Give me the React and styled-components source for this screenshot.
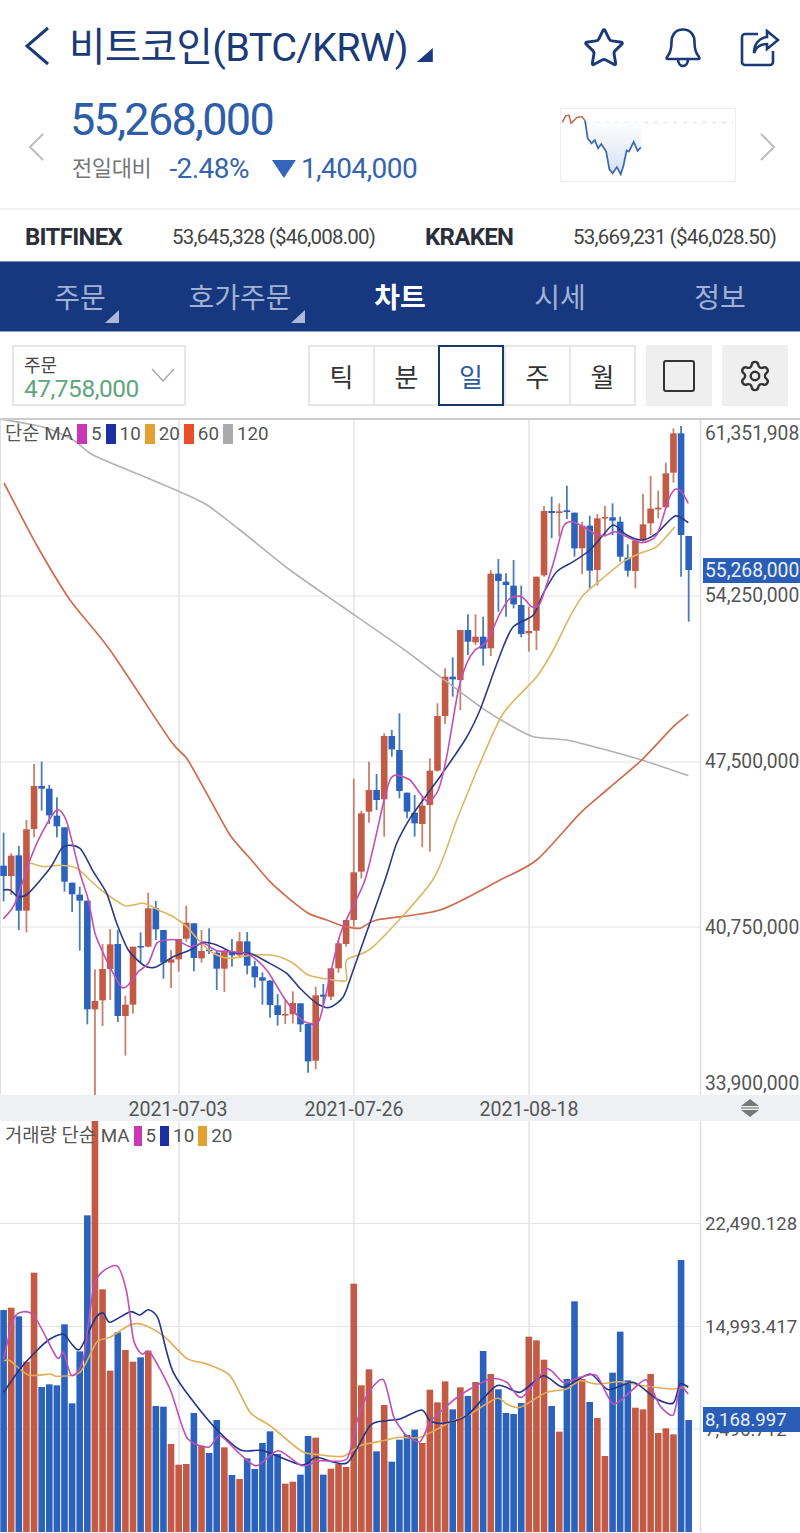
import React from "react";
import styled, { createGlobalStyle } from "styled-components";
import { Star, Settings } from "lucide-react";

const GlobalStyle = createGlobalStyle`
  html, body {
    margin: 0;
    padding: 0;
    background: #fff;
  }
  body {
    font-family: Roboto, "Noto Sans CJK KR", sans-serif;
  }
`;

const NAVY = "#1b3a78";
const RED = "#c35a45";
const BLUE = "#2b62bd";

// bar centers on the page
const barX = (k) => 3.6 + 7.612 * k;

// candles: [up?, wick top, body top, body bottom, wick bottom]
const zoomLeft = (z) => 740 + z / 3;
const zoomRight = (z) => 420 + z / 3;
const candlesLeft = [
  [0, 278, 377, 408, 484], [1, 340, 347, 408, 465], [0, 318, 346, 512, 570], [1, 240, 268, 512, 577],
  [1, 72, 138, 267, 292], [0, 65, 138, 146, 212], [0, 135, 146, 226, 252], [0, 172, 227, 259, 292],
  [0, 262, 262, 425, 455], [0, 428, 428, 463, 516], [0, 440, 464, 482, 632], [0, 482, 482, 808, 853],
  [1, 688, 783, 808, 1068], [1, 612, 687, 781, 858], [1, 567, 613, 687, 780], [0, 570, 612, 828, 846],
  [1, 767, 794, 828, 947], [1, 620, 620, 794, 821], [0, 577, 618, 622, 670], [1, 458, 505, 620, 622],
  [0, 483, 505, 568, 600], [0, 570, 570, 668, 716], [1, 630, 658, 668, 744], [1, 597, 597, 658, 695],
  [1, 497, 548, 596, 605], [0, 550, 550, 654, 694], [1, 570, 633, 655, 668], [0, 565, 629, 633, 642],
  [0, 632, 638, 686, 750], [1, 630, 632, 686, 756], [0, 597, 634, 646, 680], [1, 576, 604, 646, 652],
  [0, 576, 604, 677, 703], [0, 662, 679, 712, 743], [0, 697, 712, 722, 794], [0, 720, 722, 795, 833],
  [0, 762, 796, 825, 857], [1, 780, 822, 826, 852], [1, 754, 789, 823, 850], [0, 790, 790, 853, 876],
  [0, 852, 852, 964, 998], [1, 740, 766, 962, 988], [0, 732, 764, 770, 800], [1, 684, 685, 770, 780],
  [1, 602, 610, 685, 698], [1, 540, 540, 612, 620], [1, 116, 397, 540, 560],
].map(([up, ...ys]) => [up, ...ys.map(zoomLeft)]);
const candlesRight = [
  [1, 1172, 1180, 1355, 1375], [1, 1025, 1110, 1175, 1208], [0, 1062, 1110, 1140, 1170], [1, 940, 948, 1138, 1250],
  [0, 930, 948, 988, 1010], [0, 880, 990, 1113, 1135], [0, 1118, 1118, 1175, 1195], [0, 1125, 1178, 1210, 1250],
  [1, 1130, 1157, 1212, 1282], [1, 1015, 1052, 1155, 1295], [1, 850, 888, 1052, 1055], [1, 745, 770, 888, 912],
  [0, 712, 770, 778, 830], [1, 630, 630, 780, 870], [0, 583, 630, 665, 705], [1, 583, 650, 667, 675],
  [0, 590, 650, 686, 737], [1, 450, 461, 685, 708], [0, 417, 461, 483, 575], [0, 460, 485, 495, 590],
  [0, 420, 497, 553, 565], [0, 497, 555, 642, 652], [1, 560, 633, 640, 695], [1, 470, 470, 632, 690],
  [1, 258, 273, 466, 470], [0, 230, 273, 279, 355], [1, 250, 274, 279, 350], [0, 197, 271, 276, 297],
  [0, 278, 278, 385, 410], [1, 305, 317, 385, 462], [0, 287, 317, 452, 505], [1, 282, 295, 450, 497],
  [1, 258, 291, 294, 350], [0, 250, 292, 302, 345], [0, 290, 305, 410, 425], [0, 373, 413, 452, 470],
  [1, 360, 362, 453, 505], [1, 222, 313, 362, 365], [1, 168, 266, 310, 345], [1, 212, 263, 268, 295],
  [1, 128, 160, 262, 265], [1, 25, 40, 158, 188], [0, 18, 40, 345, 470], [0, 348, 348, 450, 605],
].map(([up, ...ys]) => [up, ...ys.map(zoomRight)]);
const candles = [...candlesLeft, ...candlesRight];

// helpers to read a polyline out of zoomed coordinates
const left = (pts) => pts.map(([x, y]) => [x / 3, 740 + y / 3]);
const right = (pts) => pts.map(([x, y]) => [340 + x / 3, 420 + y / 3]);
const toPoints = (pts) => pts.map(([x, y]) => `${x.toFixed(1)},${y.toFixed(1)}`).join(" ");

// catmull-rom through the points so the averages come out round
const smooth = (pts) => {
  let d = `M${pts[0][0].toFixed(1)} ${pts[0][1].toFixed(1)}`;
  for (let i = 0; i < pts.length - 1; i++) {
    const p0 = pts[Math.max(i - 1, 0)];
    const p1 = pts[i];
    const p2 = pts[i + 1];
    const p3 = pts[Math.min(i + 2, pts.length - 1)];
    const c1 = [p1[0] + (p2[0] - p0[0]) / 8, p1[1] + (p2[1] - p0[1]) / 8];
    const c2 = [p2[0] - (p3[0] - p1[0]) / 8, p2[1] - (p3[1] - p1[1]) / 8];
    d += `C${c1[0].toFixed(1)} ${c1[1].toFixed(1)} ${c2[0].toFixed(1)} ${c2[1].toFixed(1)} ${p2[0].toFixed(1)} ${p2[1].toFixed(1)}`;
  }
  return d;
};

const ma5 = [
  ...left([[10, 537], [45, 490], [90, 360], [125, 280], [170, 210], [200, 245], [240, 400], [265, 480], [285, 580], [310, 640], [345, 710], [365, 742], [385, 735], [415, 695], [445, 670], [470, 610], [500, 600], [530, 600], [570, 620], [610, 610], [650, 632], [700, 635], [750, 645], [800, 690], [850, 770], [900, 835], [930, 850], [960, 835]]),
  ...right([[0, 1545], [75, 1380], [130, 1150], [150, 1080], [170, 1065], [210, 1080], [240, 1120], [265, 1145], [295, 1110], [320, 1010], [355, 810], [380, 730], [405, 690], [440, 665], [480, 580], [510, 535], [545, 530], [575, 560], [600, 550], [640, 430], [670, 320], [695, 305], [730, 320], [770, 345], [800, 345], [825, 335], [860, 350], [905, 368], [950, 345], [985, 240], [1005, 208], [1025, 215], [1045, 250]]),
];
const ma10 = [
  ...left([[10, 450], [30, 450], [55, 470], [85, 460], [150, 385], [190, 320], [240, 325], [280, 395], [320, 460], [350, 550], [385, 630], [430, 675], [465, 682], [520, 650], [570, 630], [610, 607], [650, 615], [700, 638], [750, 640], [800, 665], [860, 700], [900, 745], [950, 790], [990, 802], [1030, 770]]),
  ...right([[40, 1650], [135, 1380], [170, 1270], [210, 1195], [260, 1125], [300, 1070], [375, 960], [420, 870], [460, 760], [490, 680], [520, 620], [580, 585], [610, 520], [650, 455], [700, 425], [750, 390], [785, 350], [820, 315], [860, 345], [905, 360], [950, 340], [1005, 288], [1045, 308]]),
];
const ma20 = [
  [30, 863],
  ...left([[130, 380], [180, 376], [230, 385], [270, 420], [310, 455], [375, 497], [430, 490], [480, 512], [520, 530], [560, 560], [600, 605], [640, 640], [690, 655], [760, 645], [830, 648], [880, 670], [925, 705], [1000, 720], [1040, 720]]),
  ...right([[20, 1620], [100, 1580], [278, 1380], [350, 1200], [420, 1030], [490, 880], [590, 770], [640, 690], [690, 590], [730, 525], [800, 465], [850, 425], [900, 400], [950, 380], [1005, 320]]),
];
const ma60 = [
  [4, 483], [36.6, 545], [70, 600], [110, 650],
  ...left([[510, 0], [560, 55], [620, 160], [690, 285], [750, 355], [810, 425], [860, 470], [925, 520], [980, 540], [1030, 558], [1080, 565]]),
  ...right([[110, 1500], [300, 1470], [480, 1380], [590, 1320], [720, 1180], [800, 1110], [905, 1020], [1000, 920], [1045, 883]]),
];
const ma120 = [
  [0, 419], [43, 427], [73, 440], [93, 455], [133, 472], [180, 492], [207, 505], [240, 530], [290, 570],
  ...right([[0, 555], [180, 680], [300, 770], [420, 860], [500, 910], [580, 950], [680, 960], [780, 985], [905, 1020], [1045, 1067]]),
];

// volume bars: up?, top
const volLeft = [
  [0, 663], [1, 656], [0, 682], [1, 818], [1, 551], [0, 894], [0, 886], [0, 889], [0, 706], [0, 943],
  [0, 787], [0, 379], [1, 96], [1, 601], [1, 845], [0, 730], [1, 783], [1, 818], [0, 805], [1, 785],
  [0, 951], [0, 953], [1, 1065], [1, 1127], [1, 1125], [0, 972], [1, 1070], [0, 1092], [0, 993], [1, 1075],
  [0, 1158], [1, 1170], [0, 1108], [0, 1140], [0, 1062], [0, 1027], [0, 1095], [1, 1184], [1, 1178], [0, 1157],
  [0, 1041], [1, 1046], [0, 1157], [1, 1139], [1, 1125], [1, 1134], [1, 584], [1, 889], [1, 841], [0, 1087],
  [1, 948], [0, 1118], [0, 1052], [0, 1038], [0, 1022], [1, 1062], [1, 902], [1, 940], [1, 877], [0, 961],
  [1, 895], [0, 921], [1, 879], [0, 786], [1, 855], [0, 901], [0, 972], [0, 975], [0, 942], [1, 743],
  [1, 754], [1, 812], [0, 951], [1, 1028], [0, 870], [0, 637], [1, 870], [0, 939], [1, 987], [1, 1101],
  [0, 851], [0, 728], [0, 874], [1, 956], [1, 961], [1, 855], [1, 1032], [1, 1018], [1, 1036], [0, 513],
  [0, 993],
];

const volA = (pts) => pts.map(([x, y]) => [x / 3, 1090 + y / 3]);
const volB = (pts) => pts.map(([x, y]) => [400 + x / 3, 1090 + y / 3]);
const vol5 = [
  ...volA([[11, 810], [45, 682], [100, 678], [170, 805], [190, 790], [215, 860], [250, 810], [285, 580], [350, 530], [380, 610], [400, 750], [425, 795], [450, 790], [510, 900], [560, 1045], [625, 1075], [660, 1040], [720, 1095], [770, 1130], [835, 1085], [905, 1130], [960, 1115], [1040, 1110], [1070, 1000], [1105, 912], [1150, 872], [1180, 980]]),
  ...volB([[0, 1015], [20, 1040], [60, 1058], [90, 1000], [130, 960], [185, 915], [270, 870], [320, 880], [365, 925], [440, 840], [490, 880], [540, 865], [590, 860], [640, 945], [700, 900], [740, 873], [780, 950], [820, 978], [840, 895], [865, 915]]),
];
const vol10 = [
  ...volA([[11, 910], [60, 840], [110, 785], [150, 750], [190, 735], [215, 765], [240, 780], [285, 690], [310, 672], [330, 700], [390, 668], [420, 678], [445, 662], [475, 690], [520, 850], [630, 1000], [720, 1082], [790, 1085], [905, 1128], [950, 1105], [1040, 1122], [1110, 1010], [1160, 995]]),
  ...volB([[0, 990], [65, 963], [90, 995], [130, 1003], [200, 980], [290, 890], [360, 910], [430, 860], [490, 895], [570, 855], [625, 902], [700, 880], [770, 930], [820, 942], [840, 885], [865, 895]]),
];
const vol20 = [
  ...volA([[11, 815], [30, 815], [85, 858], [150, 855], [170, 862], [240, 850], [290, 760], [330, 745], [390, 708], [430, 707], [490, 740], [560, 808], [620, 825], [690, 860], [750, 970], [810, 1010], [905, 1087], [960, 1097], [1030, 1102], [1080, 1070], [1150, 1055]]),
  ...volB([[0, 1045], [60, 1045], [150, 1000], [210, 975], [290, 928], [320, 945], [360, 955], [440, 910], [500, 900], [540, 875], [590, 885], [660, 878], [730, 890], [820, 900], [865, 890]]),
];

const sparkRed = [[30, 65], [40, 45], [50, 43], [57, 68], [75, 50], [90, 47], [100, 60]];
const sparkBlue = [[100, 60], [108, 115], [120, 130], [130, 120], [140, 145], [150, 132], [165, 155], [175, 210], [185, 222], [198, 203], [210, 225], [218, 200], [228, 152], [235, 155], [250, 125], [262, 153], [272, 142]];
const sparkPts = (pts) => pts.map(([x, y]) => [x / 3 - 10, y / 3 - 8]);

const Page = styled.div`
  width: 800px;
  height: 1533px;
  overflow: hidden;
  background: #fff;
`;

const Header = styled.header`
  height: 95px;
  display: flex;
  align-items: flex-start;
  padding: 26px 20px 0 24px;
  box-sizing: border-box;
`;

const Title = styled.h1`
  margin: 0 0 0 19px;
  font-size: 39.6px;
  line-height: 44px;
  font-weight: 400;
  color: ${NAVY};
  letter-spacing: -0.6px;
  white-space: nowrap;
`;

const TitleCorner = styled.span`
  width: 16px;
  height: 14px;
  margin: 22px 0 0 9px;
  background: #1c3a80;
  clip-path: polygon(100% 0, 100% 100%, 0 100%);
`;

const HeaderIcons = styled.div`
  margin-left: auto;
  display: flex;
  align-items: center;
  gap: 38px;
  color: ${NAVY};
`;

const Quote = styled.section`
  height: 113px;
  display: flex;
  align-items: flex-start;
  padding-left: 28px;
  box-sizing: border-box;
`;

const PagerArrow = styled.svg`
  margin-top: 38px;
  flex: none;
`;

const QuoteText = styled.div`
  margin-left: 28px;
  width: 488px;
`;

const LastPrice = styled.div`
  font-size: 45px;
  line-height: 50px;
  margin-left: -2px;
  color: #2f5ea8;
  letter-spacing: -1.7px;
`;

const ChangeRow = styled.div`
  margin-top: 8px;
  display: flex;
  align-items: center;
  color: #3364ad;
  font-size: 28px;
  line-height: 32px;
  letter-spacing: -0.55px;
`;

const ChangeLabel = styled.span`
  color: #777;
  font-size: 22px;
  letter-spacing: -0.4px;
  margin-right: 18px;
`;

const DownMark = styled.span`
  width: 24px;
  height: 18px;
  margin: 0 5px 0 23px;
  background: #3565bb;
  clip-path: polygon(0 0, 100% 0, 50% 100%);
`;

const Spark = styled.svg`
  margin: 13px 24px 0 0;
  flex: none;
  border: 1px solid #eee;
  box-sizing: border-box;
`;

const ExchangeRow = styled.section`
  height: 53px;
  border-top: 2px solid #f0f0f0;
  box-sizing: border-box;
  display: grid;
  grid-template-columns: 147px 253px 148px 1fr;
  align-items: center;
  padding: 2px 0 0 25px;
`;

const ExchangeName = styled.b`
  font-size: 24px;
  letter-spacing: -0.7px;
  color: #2a2f3a;
  font-weight: 700;
`;

const ExchangePrice = styled.span`
  font-size: 20.5px;
  letter-spacing: -0.78px;
  color: #444;
  white-space: nowrap;
`;

const NavBar = styled.nav`
  height: 71px;
  background: #17377f;
  display: grid;
  grid-template-columns: repeat(5, 160px);
  border-top: 1px solid #6f8bb8;
  border-bottom: 1px solid #8ea3c8;
  box-sizing: border-box;
`;

const NavItem = styled.div`
  position: relative;
  display: flex;
  align-items: center;
  justify-content: center;
  font-size: 28px;
  padding-bottom: 2px;
  font-family: "Noto Sans CJK KR", sans-serif;
  font-weight: ${(p) => (p.$active ? 700 : 400)};
  color: ${(p) => (p.$active ? "#fff" : "#9fb2d4")};
`;

const NavCorner = styled.span`
  position: absolute;
  right: ${(p) => p.$right}px;
  bottom: 8px;
  width: 14px;
  height: 13px;
  background: #aab9d6;
  clip-path: polygon(100% 0, 100% 100%, 0 100%);
`;

const Toolbar = styled.section`
  height: 86px;
  display: flex;
  align-items: flex-start;
  padding: 13px 12px 0;
  box-sizing: border-box;
`;

const OrderSelect = styled.div`
  width: 174px;
  height: 61px;
  border: 2px solid #e6e6e6;
  box-sizing: border-box;
  padding: 5px 0 0 10px;
  position: relative;
`;

const OrderLabel = styled.div`
  font-size: 18px;
  line-height: 24px;
  color: #444;
  font-family: "Noto Sans CJK KR", sans-serif;
`;

const OrderPrice = styled.div`
  font-size: 24.4px;
  line-height: 25px;
  color: #5ea67c;
  letter-spacing: -0.45px;
`;

const SelectChevron = styled.svg`
  position: absolute;
  right: 9px;
  top: 21px;
`;

const Segments = styled.div`
  margin-left: 122px;
  display: grid;
  grid-template-columns: 63px 65px 66px 65px 1fr;
  height: 61px;
  border: 2px solid #e6e6e6;
  box-sizing: border-box;
  width: 328px;
`;

const Segment = styled.div`
  display: flex;
  align-items: center;
  justify-content: center;
  font-size: 26px;
  font-family: "Noto Sans CJK KR", sans-serif;
  box-sizing: border-box;
  margin: ${(p) => (p.$active ? "-2px 0" : "0")};
  color: ${(p) => (p.$active ? "#2c5a9e" : "#333")};
  border: ${(p) => (p.$active ? "2px solid #17376f" : "none")};
  border-left: ${(p) => (p.$active ? "2px solid #17376f" : p.$first ? "none" : "2px solid #e6e6e6")};
`;

const ToolButton = styled.div`
  width: 66px;
  height: 61px;
  margin-left: ${(p) => p.$gap}px;
  background: #efefef;
  display: flex;
  align-items: center;
  justify-content: center;
  color: #333;
`;

const SquareGlyph = styled.span`
  width: 32px;
  height: 32px;
  border: 2.5px solid #333;
  border-radius: 3px;
  box-sizing: border-box;
`;

const ChartPanel = styled.section`
  position: relative;
  height: ${(p) => p.$height}px;
  border-top: ${(p) => (p.$ruled ? "2px solid #ccc" : "none")};
  box-sizing: border-box;
  overflow: hidden;
`;

const ChartSvg = styled.svg`
  display: block;
`;

const MaLine = styled.path`
  fill: none;
  stroke-width: ${(p) => p.$w || 1.6};
  stroke-linejoin: round;
`;

const AxisText = styled.text`
  font-family: Roboto, sans-serif;
  font-size: ${(p) => p.$size || 19.3}px;
  fill: ${(p) => p.$fill || "#555"};
`;

const Legend = styled.div`
  position: absolute;
  left: 5px;
  top: ${(p) => p.$top}px;
  display: flex;
  align-items: center;
  font-size: 18.8px;
  line-height: 20px;
  color: #555;
  white-space: nowrap;
`;

const Swatch = styled.i`
  width: ${(p) => p.$w}px;
  height: 20px;
  margin: 0 4px;
  background: ${(p) => p.$color};
`;

const DateBar = styled.div`
  height: 26px;
  background: #eef0f4;
  position: relative;
`;

const DateLabel = styled.span`
  position: absolute;
  left: ${(p) => p.$x}px;
  top: 4px;
  transform: translateX(-50%);
  font-size: 19.6px;
  line-height: 22px;
  color: #555;
`;

const Sorter = styled.svg`
  position: absolute;
  left: 740px;
  top: 3px;
`;

const MA_COLORS = { m5: "#c04fb7", m10: "#2b3a82", m20: "#dcb662", m60: "#cf6c4e", m120: "#b2b2b2" };

const PriceChart = () => (
  <ChartSvg width="800" height="675" viewBox="0 420 800 675">
    {[596, 762, 927].map((y) => (
      <line key={y} x1="0" x2="700" y1={y} y2={y} stroke="#e4e4e6" strokeWidth="1.2" />
    ))}
    {[179, 354, 529].map((x) => (
      <line key={x} x1={x} x2={x} y1="420" y2="1095" stroke="#e2e2e6" strokeWidth="1.4" />
    ))}
    <line x1="700.5" x2="700.5" y1="420" y2="1095" stroke="#dedede" strokeWidth="1.5" />
    <line x1="0.5" x2="0.5" y1="420" y2="1095" stroke="#e0e0e0" />
    {candles.map(([up, wt, bt, bb, wb], k) => (
      <g key={k}>
        <line x1={barX(k)} x2={barX(k)} y1={wt} y2={wb} stroke={up ? "#c8806f" : "#4a7cb8"} strokeWidth="1.8" />
        <rect x={barX(k) - 3.3} y={bt} width="6.6" height={Math.max(bb - bt, 1.5)} fill={up ? RED : BLUE} />
      </g>
    ))}
    <MaLine d={smooth(ma120)} stroke={MA_COLORS.m120} />
    <MaLine d={smooth(ma60)} stroke={MA_COLORS.m60} $w={1.7} />
    <MaLine d={smooth(ma20)} stroke={MA_COLORS.m20} />
    <MaLine d={smooth(ma10)} stroke={MA_COLORS.m10} />
    <MaLine d={smooth(ma5)} stroke={MA_COLORS.m5} />
    {[
      ["61,351,908", 440],
      ["54,250,000", 602],
      ["47,500,000", 768],
      ["40,750,000", 934],
      ["33,900,000", 1090],
    ].map(([label, y]) => (
      <AxisText key={label} x="705" y={y}>{label}</AxisText>
    ))}
    <rect x="703" y="558" width="97" height="25" fill="#2a5db5" />
    <AxisText x="705" y="577" $fill="#eaf0fb">55,268,000</AxisText>
  </ChartSvg>
);

const VolumeChart = () => (
  <ChartSvg width="800" height="411" viewBox="0 1122 800 411">
    {[1224.5, 1327.5, 1430].map((y) => (
      <line key={y} x1="0" x2="700" y1={y} y2={y} stroke="#e4e4e6" strokeWidth="1.2" />
    ))}
    {[179, 354, 529].map((x) => (
      <line key={x} x1={x} x2={x} y1="1122" y2="1533" stroke="#e2e2e6" strokeWidth="1.4" />
    ))}
    <line x1="700.5" x2="700.5" y1="1122" y2="1533" stroke="#dedede" strokeWidth="1.5" />
    {volLeft.map(([up, z], k) => (
      <rect key={k} x={barX(k) - 3.3} y={1090 + z / 3} width="6.6" height={1533 - (1090 + z / 3)} fill={up ? RED : BLUE} />
    ))}
    <MaLine d={smooth(vol20)} stroke="#e0ac55" />
    <MaLine d={smooth(vol10)} stroke="#22348c" />
    <MaLine d={smooth(vol5)} stroke="#c04fb7" />
    <AxisText x="705" y="1231" $size={18.6}>22,490.128</AxisText>
    <AxisText x="705" y="1334" $size={18.6}>14,993.417</AxisText>
    <AxisText x="705" y="1437" $size={18.6}>7,496.712</AxisText>
    <rect x="703" y="1408" width="97" height="25" fill="#2a5db5" />
    <AxisText x="705" y="1427" $size={18.6} $fill="#eaf0fb">8,168.997</AxisText>
  </ChartSvg>
);

const App = () => {
  const blue = sparkPts(sparkBlue);
  return (
    <Page>
      <GlobalStyle />
      <Header>
        <svg width="26" height="40" viewBox="0 0 26 40" fill="none" stroke={NAVY} strokeWidth="3">
          <path d="M24 2 3 20l21 18" />
        </svg>
        <Title>비트코인(BTC/KRW)</Title>
        <TitleCorner />
        <HeaderIcons>
          <Star size={44} strokeWidth={1.6} />
          <svg width="38" height="40" viewBox="0 0 38 40" fill="none" stroke={NAVY} strokeWidth="2.6">
            <path d="M19 1.500c-7.500 0-11.500 5.500-11.500 12.500 0 7-1.500 11-3.500 13.500-1.500 1.800-2 3.500-.5 3.500h31c1.500 0 1-1.700-.5-3.500-2-2.500-3.500-6.500-3.500-13.500C30.500 7 26.500 1.500 19 1.500Z" />
            <path d="M14 31c0 4 2 7 5 7s5-3 5-7" />
          </svg>
          <svg width="40" height="38" viewBox="0 0 40 38" fill="none" stroke={NAVY} strokeWidth="2.6">
            <path d="M18 5H5a3 3 0 0 0-3 3v25a3 3 0 0 0 3 3h25a3 3 0 0 0 3-3V22" />
            <path d="M27 2 38 11 27 20v-5c-7 0-11 3-13 9 0-9 5-15 13-16Z" />
          </svg>
        </HeaderIcons>
      </Header>

      <Quote>
        <PagerArrow width="16" height="28" viewBox="0 0 16 28" fill="none" stroke="#bdbdbd" strokeWidth="2">
          <path d="M15 1 2 14l13 13" />
        </PagerArrow>
        <QuoteText>
          <LastPrice>55,268,000</LastPrice>
          <ChangeRow>
            <ChangeLabel>전일대비</ChangeLabel>
            -2.48%
            <DownMark />
            1,404,000
          </ChangeRow>
        </QuoteText>
        <Spark width="176" height="74" viewBox="0 0 176 74">
          <defs>
            <linearGradient id="sparkFill" x1="0" x2="0" y1="0" y2="1">
              <stop offset="0" stopColor="#fff" />
              <stop offset="1" stopColor="#d5e1f1" />
            </linearGradient>
          </defs>
          <line x1="24" x2="176" y1="14" y2="14" stroke="#e2e2e2" strokeWidth="1.4" strokeDasharray="4 6" />
          <polygon points={`24,14 ${toPoints(blue)} 81,14`} fill="url(#sparkFill)" />
          <polyline points={toPoints(sparkPts(sparkRed))} fill="none" stroke="#c4685a" strokeWidth="1.6" />
          <polyline points={toPoints(blue)} fill="none" stroke="#3b6aa8" strokeWidth="1.8" />
        </Spark>
        <PagerArrow width="16" height="28" viewBox="0 0 16 28" fill="none" stroke="#bdbdbd" strokeWidth="2">
          <path d="M1 1l13 13L1 27" />
        </PagerArrow>
      </Quote>

      <ExchangeRow>
        <ExchangeName>BITFINEX</ExchangeName>
        <ExchangePrice>53,645,328 ($46,008.00)</ExchangePrice>
        <ExchangeName>KRAKEN</ExchangeName>
        <ExchangePrice>53,669,231 ($46,028.50)</ExchangePrice>
      </ExchangeRow>

      <NavBar>
        <NavItem>주문<NavCorner $right={41} /></NavItem>
        <NavItem>호가주문<NavCorner $right={15} /></NavItem>
        <NavItem $active>차트</NavItem>
        <NavItem>시세</NavItem>
        <NavItem>정보</NavItem>
      </NavBar>

      <Toolbar>
        <OrderSelect>
          <OrderLabel>주문</OrderLabel>
          <OrderPrice>47,758,000</OrderPrice>
          <SelectChevron width="24" height="14" viewBox="0 0 24 14" fill="none" stroke="#aaa" strokeWidth="1.5">
            <path d="M1 1l11 12L23 1" />
          </SelectChevron>
        </OrderSelect>
        <Segments>
          <Segment $first>틱</Segment>
          <Segment>분</Segment>
          <Segment $active>일</Segment>
          <Segment>주</Segment>
          <Segment>월</Segment>
        </Segments>
        <ToolButton $gap={10}><SquareGlyph /></ToolButton>
        <ToolButton $gap={10}><Settings size={34} strokeWidth={1.7} /></ToolButton>
      </Toolbar>

      <ChartPanel $height={677} $ruled>
        <PriceChart />
        <Legend $top={4}>
          단순 MA
          <Swatch $w={10} $color="#c937b4" />5
          <Swatch $w={10} $color="#1a2fa0" />10
          <Swatch $w={10} $color="#e4a030" />20
          <Swatch $w={10} $color="#e8502a" />60
          <Swatch $w={10} $color="#aaaaaa" />120
        </Legend>
      </ChartPanel>

      <DateBar>
        <DateLabel $x={178}>2021-07-03</DateLabel>
        <DateLabel $x={354}>2021-07-26</DateLabel>
        <DateLabel $x={529}>2021-08-18</DateLabel>
        <Sorter width="20" height="20" viewBox="0 0 20 20" fill="#777">
          <path d="M10 1l9 7H1zM10 19l9-7H1z" />
          <rect x="1" y="9" width="18" height="2" fill="#aaa" />
        </Sorter>
      </DateBar>

      <ChartPanel $height={411}>
        <VolumeChart />
        <Legend $top={5}>
          거래량 단순 MA
          <Swatch $w={8} $color="#c937b4" />5
          <Swatch $w={9} $color="#1a2fa0" />10
          <Swatch $w={9} $color="#e4a030" />20
        </Legend>
      </ChartPanel>
    </Page>
  );
};

export default App;
